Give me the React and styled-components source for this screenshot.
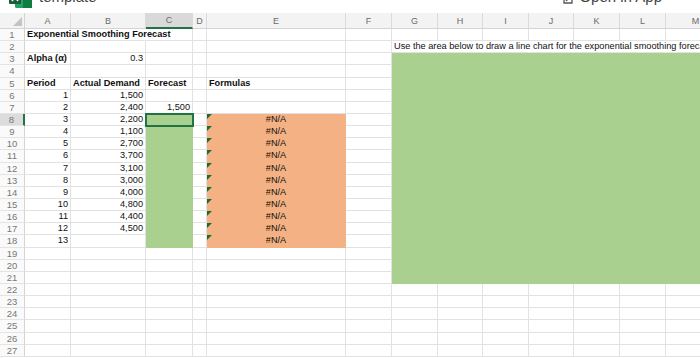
import React from 'react'
import styled, { createGlobalStyle } from 'styled-components'

const GlobalStyle = createGlobalStyle`
    html, body {
        margin: 0;
        padding: 0;
        background: #ffffff;
        overflow: hidden;
    }
    body {
        font-family: "Liberation Sans", Arial, sans-serif;
    }
`

const Page = styled.div`
    width: 700px;
    height: 358px;
    overflow: hidden;
    background: #fff;
`

const TopBar = styled.div`
    height: 13px;
    overflow: hidden;
    display: flex;
    align-items: flex-start;
    justify-content: space-between;
    padding: 0 0 0 9px;
    box-sizing: border-box;
`

const DocTitle = styled.div`
    display: flex;
    align-items: flex-start;
    gap: 7px;
`

const TitleText = styled.span`
    font-size: 15px;
    line-height: 15px;
    margin-top: -11px;
    color: #444;
`

const OpenApp = styled.div`
    display: flex;
    align-items: flex-start;
    gap: 5px;
    margin-right: 38px;
    font-size: 15px;
    line-height: 15px;
    color: #444;
`

const OpenAppText = styled.span`
    margin-top: -11px;
`

const Sheet = styled.div`
    display: grid;
    grid-template-columns: 25px 46px 75px 47px 14px 139px 46px 46px 45px 46px 45px 46px 46px 60px;
    grid-template-rows: 16px repeat(27, 12.15px);
    width: 727px;
`

const Corner = styled.div`
    background: #f3f3f3;
    border-bottom: 1px solid #d4d4d4;
    border-right: 1px solid #d4d4d4;
    position: relative;
    &::after {
        content: '';
        position: absolute;
        right: 2px;
        bottom: 2px;
        border-style: solid;
        border-width: 0 0 9px 9px;
        border-color: transparent transparent #c4c4c4 transparent;
    }
`

const ColHead = styled.div`
    background: ${p => (p.$active ? '#d9d9d9' : '#f3f3f3')};
    border-bottom: ${p => (p.$active ? '2px solid #217346' : '1px solid #d4d4d4')};
    border-right: 1px solid #dadada;
    color: #6b6b6b;
    font-size: 9px;
    display: flex;
    align-items: center;
    justify-content: center;
    box-sizing: border-box;
`

const RowHead = styled.div`
    background: ${p => (p.$active ? '#dcdcdc' : '#fafafa')};
    border-right: ${p => (p.$active ? '2px solid #217346' : '1px solid #d4d4d4')};
    border-bottom: 1px solid #e4e4e4;
    color: #777;
    font-size: 9.5px;
    display: flex;
    align-items: center;
    justify-content: center;
    box-sizing: border-box;
`

const Cell = styled.div`
    position: relative;
    box-sizing: border-box;
    background: ${p => p.$fill || 'transparent'};
    border-right: 1px solid ${p => (p.$fill ? p.$fill : p.$noRight ? 'transparent' : '#e2e2e2')};
    border-bottom: 1px solid ${p => p.$fill || '#e2e2e2'};
    outline: ${p => (p.$selected ? '2px solid #217346' : 'none')};
    outline-offset: -1px;
    z-index: ${p => (p.$selected ? 2 : p.$spill ? 1 : 'auto')};
    font-size: 9.2px;
    font-weight: ${p => (p.$bold ? 700 : 400)};
    color: #111;
    white-space: nowrap;
    overflow: visible;
    display: flex;
    align-items: center;
    justify-content: ${p => (p.$align === 'right' ? 'flex-end' : p.$align === 'center' ? 'center' : 'flex-start')};
    padding: 0 ${p => (p.$align === 'right' ? '2px' : '0')} 0 ${p => (p.$align === 'left' ? '2px' : '0')};
    line-height: 1;
    &::before {
        content: '';
        display: ${p => (p.$flag ? 'block' : 'none')};
        position: absolute;
        left: 0;
        top: 0;
        border-style: solid;
        border-width: 5px 5px 0 0;
        border-color: #1e6b3a transparent transparent transparent;
    }
`

const ChartArea = styled.div`
    grid-column: 8 / 15;
    grid-row: 4 / 23;
    background: #a9d08e;
`

const ExcelIcon = () => (
    <svg width="23" height="22" viewBox="0 0 23 22" style={{ marginTop: '-14px' }}>
        <rect x="6" y="0" width="17" height="22" rx="1.5" fill="#21a366" />
        <rect x="14" y="11" width="9" height="11" fill="#107c41" />
        <rect x="0" y="4" width="12" height="14" rx="1" fill="#185c37" />
        <path d="M3 7 L9 15 M9 7 L3 15" stroke="#fff" strokeWidth="1.6" />
    </svg>
)

const AppIcon = () => (
    <svg width="12" height="14" viewBox="0 0 12 14" style={{ marginTop: '-9px' }}>
        <path d="M2 2 L10 2 L10 12 L2 12 Z" fill="none" stroke="#555" strokeWidth="1.3" />
        <path d="M4 10 L9 5" stroke="#555" strokeWidth="1.3" />
    </svg>
)

const COLS = ['A', 'B', 'C', 'D', 'E', 'F', 'G', 'H', 'I', 'J', 'K', 'L', 'M']

const demand = ['1,500', '2,400', '2,200', '1,100', '2,700', '3,700', '3,100', '3,000', '4,000', '4,800', '4,400', '4,500']

const GREEN = '#a9d08e'
const ORANGE = '#f4b183'

const cellProps = (r, c) => {
    const col = COLS[c]
    if (r === 1 && col === 'A') return { text: 'Exponential Smoothing Forecast', $bold: true, $align: 'left', $noRight: true, $spill: true }
    if (r === 1 && col === 'B') return { $noRight: true }
    if (r === 2 && col === 'G') return { text: 'Use the area below to draw a line chart for the exponential smoothing forecast', $align: 'left', $noRight: true, $spill: true }
    if (r === 2 && c > 6) return { $noRight: true }
    if (r === 3 && col === 'A') return { text: 'Alpha (\u03b1)', $bold: true, $align: 'left' }
    if (r === 3 && col === 'B') return { text: '0.3', $align: 'right' }
    if (r === 5) {
        const heads = { A: 'Period', B: 'Actual Demand', C: 'Forecast', E: 'Formulas' }
        if (heads[col]) return { text: heads[col], $bold: true, $align: 'left' }
    }
    if (r >= 6 && r <= 18 && col === 'A') return { text: String(r - 5), $align: 'right' }
    if (r >= 6 && r <= 17 && col === 'B') return { text: demand[r - 6], $align: 'right' }
    if (r === 7 && col === 'C') return { text: '1,500', $align: 'right' }
    if (r >= 8 && r <= 18 && col === 'C') return { $fill: GREEN, $selected: r === 8 }
    if (r >= 8 && r <= 18 && col === 'E') return { text: '#N/A', $fill: ORANGE, $align: 'center', $flag: true }
    return {}
}

export default class App extends React.Component {
    renderRows() {
        const out = []
        for (let r = 1; r <= 27; r++) {
            out.push(<RowHead key={'rh' + r} $active={r === 8}>{r}</RowHead>)
            COLS.forEach((col, c) => {
                // G3:M21 is the chart area, drawn as one block
                if (r >= 3 && r <= 21 && c >= 6) return
                const { text, ...rest } = cellProps(r, c)
                out.push(<Cell key={col + r} {...rest}>{text}</Cell>)
            })
        }
        return out
    }

    render() {
        return (
            <Page>
                <GlobalStyle />
                <TopBar>
                    <DocTitle>
                        <ExcelIcon />
                        <TitleText>template</TitleText>
                    </DocTitle>
                    <OpenApp>
                        <AppIcon />
                        <OpenAppText>Open in App</OpenAppText>
                    </OpenApp>
                </TopBar>
                <Sheet>
                    <Corner />
                    {COLS.map(col => (
                        <ColHead key={col} $active={col === 'C'}>{col}</ColHead>
                    ))}
                    <ChartArea />
                    {this.renderRows()}
                </Sheet>
            </Page>
        )
    }
}
